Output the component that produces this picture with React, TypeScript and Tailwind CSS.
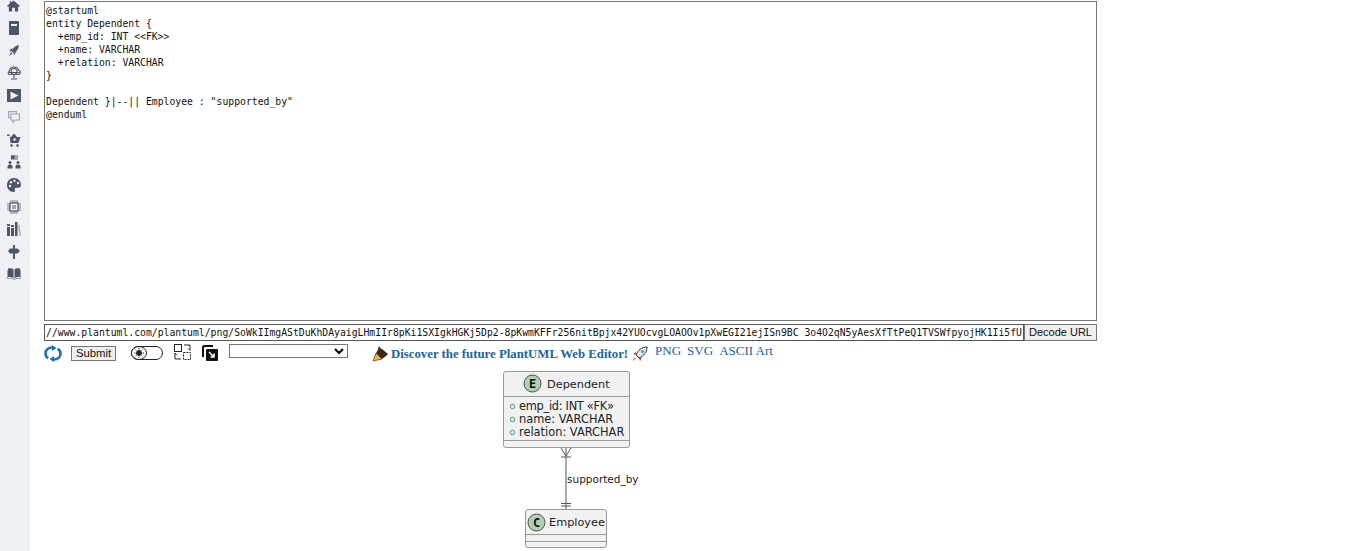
import React from "react";

const code = `@startuml
entity Dependent {
  +emp_id: INT <<FK>>
  +name: VARCHAR
  +relation: VARCHAR
}

Dependent }|--|| Employee : "supported_by"
@enduml`;

const url = "//www.plantuml.com/plantuml/png/SoWkIImgAStDuKhDAyaigLHmIIr8pKi1SXIgkHGKj5Dp2-8pKwmKFFr256nitBpjx42YUOcvgLOAOOv1pXwEGI21ejISn9BC_3o4O2qN5yAesXfTtPeQ1TVSWfpyojHK1Ii5fUIm";

const D = "#4d5666";
const L = "#a3a9b3";
const BG = "#edf0f4";

const icons: React.ReactNode[] = [
  <svg key="home" width="13" height="12" viewBox="0 0 14 12"><path d="M7 0 14 6l-1 1-1-.8V12H8.500V8h-3v4H2V6.200L1 7 0 6l3-2.600V1h1.500v1.100z" fill={D} /></svg>,
  <svg key="book" width="10" height="14" viewBox="0 0 10 14"><rect width="10" height="14" rx="1" fill={D} /><rect x="2" y="3" width="6" height="2" fill={BG} /></svg>,
  <svg key="rocket" width="10" height="11" viewBox="0 0 10 11"><path d="M10 0C6.500.5 4 2.500 2.500 6l2 2C8 6.500 9.500 4 10 0z" fill={D} /><path d="M3.500 3 0 5.500 2.500 6.500zM7.500 6 5 10.500 4.500 8zM2 7l-2 4 3.500-2.500z" fill={D} /></svg>,
  <svg key="cloud" width="14" height="15" viewBox="0 0 14 15" fill="none" stroke={D} strokeWidth="1.100"><path d="M3 9.500C.8 9.500.5 6.500 2.500 6 2.500 3 5.500 1 8 2.500c2-.5 3.500 1 3.500 3 2.500 0 2.500 4-.5 4z" /><circle cx="7" cy="6.500" r="3" /><path d="M1.500 7.500h11M7 9.500V13M4 14h6" /></svg>,
  <svg key="play" width="14" height="13" viewBox="0 0 14 13"><rect width="14" height="13" fill={D} /><path d="M3.500 2.500 11.500 6.500 3.500 10.500Z" fill={BG} /></svg>,
  <svg key="comments" width="12" height="12" viewBox="0 0 12 12" fill={BG} stroke={L} strokeWidth="1.200"><path d="M.6.600h7.800v6H.6z" /><path d="M3 3h8.400v6H7l-2 2.300V9H3z" /></svg>,
  <svg key="cart" width="14" height="14" viewBox="0 0 14 14"><path d="M0 1.500h2.500L3.500 10h8L13.500 4H10L7 .5 4 4H3L2.500 3H0z" fill={D} /><circle cx="7.500" cy="6.500" r="1.300" fill={BG} /><circle cx="4.500" cy="12.500" r="1.300" fill={D} /><circle cx="10.500" cy="12.500" r="1.300" fill={D} /></svg>,
  <svg key="people" width="14" height="14" viewBox="0 0 14 14" fill={D}><rect x="4" y="0" width="7" height="5" fill={L} /><rect x="4" y="0.500" width="3.500" height="3.500" /><circle cx="3" cy="7.500" r="1.500" /><circle cx="11" cy="7.500" r="1.500" /><path d="M.5 13.500v-2Q.5 9.500 3 9.500t2.500 2v2zM8.500 13.500v-2q0-2 2.500-2t2.500 2v2z" /></svg>,
  <svg key="palette" width="14" height="14" viewBox="0 0 14 14"><path d="M7 0C3 0 0 3 0 7s3 7 6.500 7c1.500 0 1.800-1 1.300-2-.6-1.200.2-2.300 1.500-2.300H11.500C13 9.700 14 8.500 14 7 14 3 11 0 7 0z" fill={D} /><circle cx="3" cy="8" r="1.200" fill={BG} /><circle cx="4" cy="4.200" r="1.200" fill={BG} /><circle cx="7.500" cy="2.800" r="1.200" fill={BG} /><circle cx="11" cy="5" r="1.200" fill={BG} /></svg>,
  <svg key="chip" width="14" height="14" viewBox="0 0 14 14"><path d="M4 0v14M6 0v14M8 0v14M10 0v14M0 4h14M0 6h14M0 8h14M0 10h14" stroke={D} strokeWidth="0.700" /><rect x="3" y="3" width="8" height="8" fill={BG} stroke={D} strokeWidth="1.200" /><rect x="5" y="5" width="4" height="4" fill={L} /></svg>,
  <svg key="books" width="14" height="14" viewBox="0 0 14 14"><path d="M0 2h3v12H0zM4 3h3v11H4zM8 0h2.500v14H8z" fill={D} /><rect x="0" y="4" width="3" height="1" fill={BG} /><rect x="4" y="5" width="3" height="1" fill={BG} /><path d="M11 3l1.300-.4L14 13.500l-1.500.5z" fill={L} /></svg>,
  <svg key="sign" width="12" height="14" viewBox="0 0 12 14"><path d="M5 0h2v3.500h2.500L12 6 9.500 8.500H7V14H5V8.500H2L0 6l2-2.500h3z" fill={D} /></svg>,
  <svg key="openbook" width="14" height="12" viewBox="0 0 14 12"><path d="M6.500 1C5 0 2.500 0 1 .5V9c2 0 4 0 5.500 1zM7.500 1C9 0 11.500 0 13 .5V9c-2 0-4 0-5.500 1z" fill={D} /><path d="M0 2v8.500c2.500-.2 4.500 0 6.500 1h1c2-1 4-1.200 6.500-1V2h-.5v8c-2.500 0-4.500.2-6.500 1-2-.8-4-1-6.500-1V2z" fill={D} /></svg>,
];

function Sidebar() {
  return (
    <div className="w-[30px] shrink-0 bg-[#edf0f4] h-[551px] overflow-hidden pr-[3px]">
      <div className="flex flex-col -mt-[5.7px]">
        {icons.map((icon, i) => (
          <div key={i} className="h-[22.4px] shrink-0 flex items-center justify-center">{icon}</div>
        ))}
      </div>
    </div>
  );
}

function Diagram() {
  return (
    <svg width="160" height="186" viewBox="490 365 160 186" className="block">
      <rect x="503.500" y="371.500" width="126" height="76" rx="2.500" fill="#f1f1f1" stroke="#9a9a9a" />
      <line x1="504" x2="629" y1="396.500" y2="396.500" stroke="#9a9a9a" />
      <line x1="504" x2="629" y1="440.500" y2="440.500" stroke="#9a9a9a" />
      <circle cx="532.500" cy="383.500" r="8.500" fill="#add1b2" stroke="#505050" />
      <text x="532.500" y="388" textAnchor="middle" className="text-[12px] font-bold" fill="#111" fontFamily="'DejaVu Sans Mono', monospace">E</text>
      <text x="547" y="387.500" fill="#222" className="text-[11.300px]">Dependent</text>
      <circle cx="512.500" cy="406.500" r="2.200" fill="none" stroke="#3f8f7f" />
      <circle cx="512.500" cy="419.500" r="2.200" fill="none" stroke="#3f8f7f" />
      <circle cx="512.500" cy="432.500" r="2.200" fill="none" stroke="#3f8f7f" />
      <text x="519" y="410" fill="#222" className="text-[11.400px]" textLength={95}>emp_id: INT «FK»</text>
      <text x="519" y="423" fill="#222" className="text-[11.400px]">name: VARCHAR</text>
      <text x="519" y="436" fill="#222" className="text-[11.400px]">relation: VARCHAR</text>
      <path d="M566 448V509M561 448l5 8 5-8M561 457h10M561 503.500h10M561 506h10" fill="none" stroke="#555" />
      <text x="567" y="482.500" fill="#222" className="text-[10.500px]">supported_by</text>
      <rect x="525.500" y="509.500" width="81" height="38" rx="2.500" fill="#f1f1f1" stroke="#9a9a9a" />
      <line x1="526" x2="606" y1="534.500" y2="534.500" stroke="#9a9a9a" />
      <line x1="526" x2="606" y1="541.500" y2="541.500" stroke="#9a9a9a" />
      <circle cx="536.500" cy="522.500" r="8.500" fill="#add1b2" stroke="#505050" />
      <text x="536.500" y="527" textAnchor="middle" className="text-[12px] font-bold" fill="#111" fontFamily="'DejaVu Sans Mono', monospace">C</text>
      <text x="549" y="526" fill="#222" className="text-[11.300px]">Employee</text>
    </svg>
  );
}

export default function App() {
  return (
    <div className="flex w-[1352px] h-[551px] overflow-hidden bg-white font-['DejaVu_Sans',sans-serif]">
      <Sidebar />
      <div className="w-[1067px] pl-[14px] pt-px">
        <textarea
          readOnly
          value={code}
          className="block w-[1053px] h-[320px] border border-[#767676] px-[1px] py-[2px] font-['DejaVu_Sans_Mono',monospace] text-[9.770px] leading-[13px] text-[#111] resize-none outline-none"
        />
        <div className="flex mt-[3px] h-[17px]">
          <input
            readOnly
            value={url}
            className="w-[980px] h-[17px] border border-[#555] px-[1px] font-['DejaVu_Sans_Mono',monospace] text-[9.770px] leading-[normal] text-[#111] outline-none"
          />
          <button className="w-[73px] h-[17px] bg-[#efefef] border border-[#767676] font-['Liberation_Sans',sans-serif] text-[11px] leading-none text-[#111]">Decode URL</button>
        </div>
        <div className="flex items-start mt-[3px] h-[20px]">
          <svg width="18" height="17" viewBox="0 0 18 17" fill="none" className="mt-px">
            <path d="M8.500 2.500C4 2.500 1.500 5 1.500 8.500c0 2 1 3.700 2.800 4.700" stroke="#1a6fb8" strokeWidth="2.600" />
            <path d="M9.500 14.500c4.500 0 7-2.500 7-6 0-2-1-3.700-2.800-4.700" stroke="#1a6fb8" strokeWidth="2.600" />
            <path d="M8 0v6l4.500-3zM10 17v-6l-4.500 3z" fill="#1a6fb8" />
          </svg>
          <button className="ml-[9px] mt-[2px] w-[45px] h-[15px] bg-[#efefef] border border-[#767676] font-['Liberation_Sans',sans-serif] text-[11.300px] leading-none text-[#111]">Submit</button>
          <svg width="33" height="14" viewBox="0 0 33 14" className="ml-[15px] mt-[2px]" fill="none" stroke="#222">
            <rect x="0.500" y="0.500" width="31" height="13" rx="6.500" />
            <ellipse cx="8" cy="7" rx="7.500" ry="6.500" fill="#fff" />
            <circle cx="8" cy="7" r="2.500" fill="#222" />
            <path d="M8 2v1.500M8 10.500V12M3 7h1.500M11.500 7H13M4.500 3.500l1 1M10.500 9.500l1 1M4.500 10.500l1-1M10.500 4.500l1-1" strokeWidth="0.800" />
          </svg>
          <svg width="17" height="16" viewBox="0 0 17 16" className="ml-[10px]" fill="none" stroke="#222">
            <rect x="0.500" y="0.500" width="7" height="7" />
            <path d="M10 1h6v5" />
            <path d="M14 4.500l2 2 1-1" strokeWidth="0.800" />
            <path d="M1 9v6h6" />
            <path d="M0 10.500 1 9l2 2" strokeWidth="0.800" />
            <rect x="9.500" y="8.500" width="7" height="7" strokeDasharray="2 1" />
          </svg>
          <svg width="16" height="16" viewBox="0 0 16 16" className="ml-[11px] mt-px">
            <path d="M1 12V2.500Q1 1 2.500 1H11" fill="none" stroke="#111" strokeWidth="2" />
            <rect x="4" y="4" width="12" height="12" rx="1" fill="#111" />
            <path d="M7 7l5 5M12 8.500V12H8.500" fill="none" stroke="#fff" strokeWidth="1.500" />
          </svg>
          <select className="ml-[11px] w-[119px] h-[14px] border border-[#767676] bg-white text-[10px]" />
          <svg width="16" height="16" viewBox="0 0 16 16" className="ml-[24px] mt-[2px]">
            <path d="M1 15 4 7l6 6z" fill="#e8b84a" stroke="#6b4a16" strokeWidth="0.800" />
            <path d="M4 7 7 2l3 1 6 5-2 2-4 3z" fill="#3b2a17" />
            <path d="M7 0l2 3-3 0z" fill="#3b2a17" />
          </svg>
          <a className="ml-[3px] mt-[1px] font-['Liberation_Serif',serif] font-bold text-[#1a64a8] text-[12.800px] leading-[18px]">Discover the future PlantUML Web Editor!</a>
          <svg width="16" height="16" viewBox="0 0 16 16" className="ml-[4px] mt-[2px]">
            <path d="M15 1C10 1 6 4 4 9l3 3c5-2 8-6 8-11z" fill="#e7e7e7" stroke="#333" />
            <circle cx="10.500" cy="5.500" r="1.500" fill="#4a90c2" />
            <path d="M4 6 1 8l3 1zM10 12l-2 3-1-3zM4 12l-3 3 1-3z" fill="#d94d2b" />
          </svg>
          <div className="ml-[7px] flex gap-[6px] font-['Liberation_Serif',serif] text-[#1a64a8] text-[13px] leading-[15px] -mt-px">
            <a>PNG</a><a>SVG</a><a>ASCII Art</a>
          </div>
        </div>
        <div className="ml-[446px] mt-[1px]">
          <Diagram />
        </div>
      </div>
    </div>
  );
}
